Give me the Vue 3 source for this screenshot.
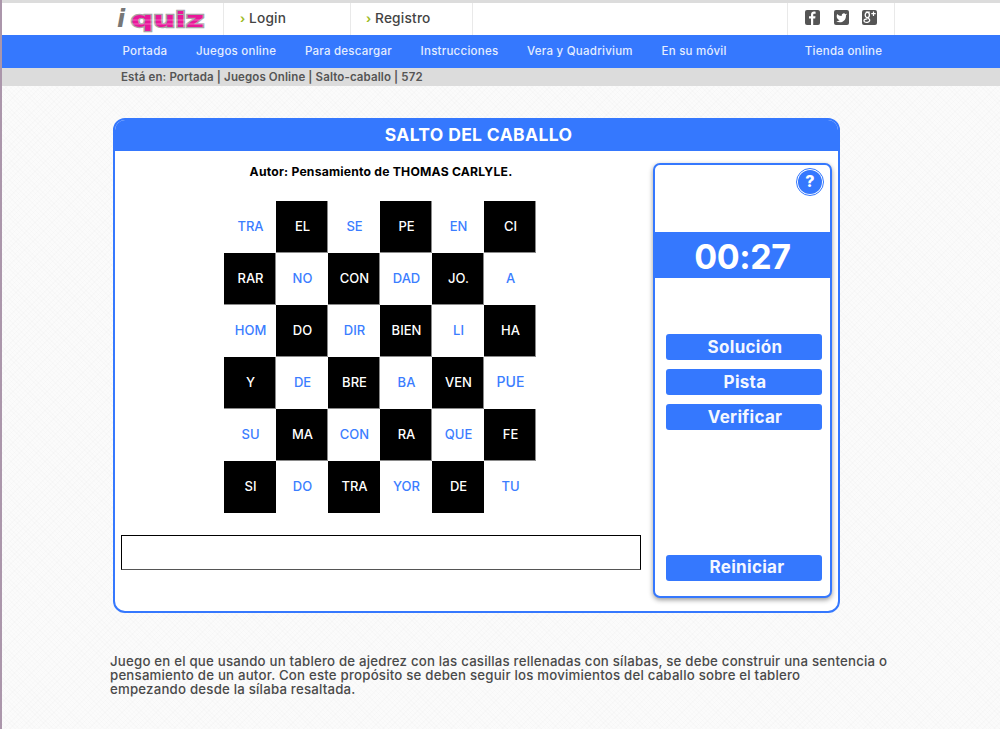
<script setup>
const nav = [
  { label: 'Portada' },
  { label: 'Juegos online' },
  { label: 'Para descargar' },
  { label: 'Instrucciones' },
  { label: 'Vera y Quadrivium' },
  { label: 'En su móvil' },
  { label: 'Tienda online', cls: 'shop' }
]
const rows = [
  ['TRA', 'EL', 'SE', 'PE', 'EN', 'CI'],
  ['RAR', 'NO', 'CON', 'DAD', 'JO.', 'A'],
  ['HOM', 'DO', 'DIR', 'BIEN', 'LI', 'HA'],
  ['Y', 'DE', 'BRE', 'BA', 'VEN', 'PUE'],
  ['SU', 'MA', 'CON', 'RA', 'QUE', 'FE'],
  ['SI', 'DO', 'TRA', 'YOR', 'DE', 'TU']
]
const cells = rows.flatMap((row, r) =>
  row.map((text, c) => ({
    text,
    dark: (r + c) % 2 === 1,
    last: r === 5,
    big: text === 'PUE'
  }))
)
</script>

<template>
  <div class="page">
    <header class="top">
      <div class="logo-cell">
        <svg class="logo" width="92" height="26" viewBox="0 0 92 26">
          <text x="1" y="18" class="logo-i">i</text>
          <text x="15" y="18" class="logo-q" textLength="73" lengthAdjust="spacingAndGlyphs">quiz</text>
          <path d="M15 11H88M15 15H88" stroke="#fff" stroke-opacity=".45" stroke-width=".8" />
        </svg>
      </div>
      <a class="tab tab-login"><span class="arrow">›</span>Login</a>
      <a class="tab tab-reg"><span class="arrow">›</span>Registro</a>
      <div class="social">
        <svg width="15" height="15" viewBox="0 0 15 15">
          <rect width="15" height="15" rx="2" fill="#555" />
          <path d="M8.2 15V8.6h2l.3-2.3H8.2V4.9c0-.7.2-1.1 1.1-1.1h1.3V1.7C10.300 1.700 9.700 1.600 9 1.600 7.300 1.600 6 2.700 6 4.600v1.700H4v2.300h2V15z" fill="#fff" />
        </svg>
        <svg width="15" height="15" viewBox="0 0 15 15">
          <rect width="15" height="15" rx="2" fill="#555" />
          <g transform="translate(1.700 2) scale(.49)">
            <path d="M23 3a10.900 10.900 0 0 1-3 1.400 4.500 4.500 0 0 0-7.900 3v1A10.700 10.700 0 0 1 3 4s-4 9 5 13a11.600 11.600 0 0 1-7 2c9 5 20 0 20-11.500a4.500 4.500 0 0 0-.1-.8A7.700 7.700 0 0 0 23 3z" fill="#fff" />
          </g>
        </svg>
        <svg width="15" height="15" viewBox="0 0 15 15">
          <rect width="15" height="15" rx="2" fill="#555" />
          <g fill="none" stroke="#fff" stroke-width="1.300">
            <ellipse cx="5.300" cy="5" rx="2.100" ry="2.600" />
            <path d="M7.800 2.100H3.800M6.600 7.300c-.6.6-.2 1 .5 1.600 1 .9 1 2.900-1.800 3.400-2 .3-3.300-.5-3.300-1.600 0-1.200 1.500-1.900 3.500-1.800" />
            <path d="M11.500 1.500v4.500M9.300 3.700h4.400" stroke-width="1.200" />
          </g>
        </svg>
      </div>
    </header>

    <nav class="nav">
      <a v-for="item in nav" :key="item.label" class="nav-item" :class="item.cls">{{ item.label }}</a>
    </nav>

    <div class="crumb">Está en: Portada | Juegos Online | Salto-caballo | 572</div>

    <main class="main">
      <section class="card">
        <h1 class="card-title">SALTO DEL CABALLO</h1>
        <div class="card-body">
          <div class="game">
            <p class="author">Autor: Pensamiento de THOMAS CARLYLE.</p>
            <div class="board">
              <div
                v-for="(cell, i) in cells"
                :key="i"
                class="cell"
                :class="{ dark: cell.dark, last: cell.last, big: cell.big }"
              >{{ cell.text }}</div>
            </div>
            <div class="answer"></div>
          </div>

          <aside class="panel">
            <div class="help-row">
              <span class="help"><span class="help-inner">?</span></span>
            </div>
            <div class="timer">00:27</div>
            <div class="actions">
              <button class="btn">Solución</button>
              <button class="btn">Pista</button>
              <button class="btn">Verificar</button>
              <button class="btn reset">Reiniciar</button>
            </div>
          </aside>
        </div>
      </section>

      <p class="desc">
        Juego en el que usando un tablero de ajedrez con las casillas rellenadas con sílabas, se debe construir una sentencia o<br />
        pensamiento de un autor. Con este propósito se deben seguir los movimientos del caballo sobre el tablero<br />
        empezando desde la sílaba resaltada.
      </p>
    </main>
  </div>
</template>

<style>
html, body {
  margin: 0;
  background: #fbfbfb;
}
</style>

<style scoped>
.page {
  box-sizing: border-box;
  min-height: 729px;
  border-left: 2px solid #ab96ab;
  font-family: Inter, "Open Sans", "Liberation Sans", sans-serif;
  background-color: #fbfbfb;
  background-image:
    repeating-linear-gradient(45deg, rgba(0, 0, 0, .012) 0 1px, transparent 1px 3px),
    repeating-linear-gradient(-45deg, rgba(0, 0, 0, .012) 0 1px, transparent 1px 4px);
  overflow: hidden;
}

.top {
  display: flex;
  height: 32px;
  background: #fff;
  border-top: 3px solid #dcdcdc;
}
.logo-cell {
  box-sizing: border-box;
  width: 222px;
  height: 32px;
  padding: 6px 0 0 114px;
  border-right: 1px solid #e9e9e9;
}
.logo { display: block; overflow: visible; }
.logo-i {
  font: italic 700 24px "DejaVu Sans", sans-serif;
  fill: #777;
}
.logo-q {
  font: 700 22px "DejaVu Sans", sans-serif;
  fill: #e9179a;
  stroke: #aaa3a7;
  stroke-width: 2.400px;
  paint-order: stroke;
}
.tab {
  box-sizing: border-box;
  display: flex;
  align-items: center;
  height: 32px;
  padding-left: 16px;
  font-size: 13.700px;
  font-weight: 500;
  letter-spacing: .2px;
  color: #444;
  border-right: 1px solid #e9e9e9;
  padding-bottom: 2px;
}
.tab-login { width: 127px; }
.tab-reg { width: 122px; padding-left: 15px; }
.arrow {
  width: 9px;
  font-size: 12px;
  font-weight: 700;
  color: #9dbb1f;
}
.social {
  box-sizing: border-box;
  display: flex;
  gap: 14px;
  height: 32px;
  margin-left: 314px;
  padding: 7px 0 0 17px;
  width: 108px;
  border-left: 1px solid #e9e9e9;
  border-right: 1px solid #e9e9e9;
}
.social svg:last-child { margin-left: -1px; }

.nav {
  display: flex;
  align-items: center;
  gap: 28.700px;
  box-sizing: border-box;
  height: 33px;
  padding: 0 0 2px 120.500px;
  background: #3578fe;
}
.nav-item {
  font-size: 11.500px;
  font-weight: 500;
  letter-spacing: .25px;
  color: #e4edff;
}
.shop { margin-left: 49.500px; }

.crumb {
  height: 18px;
  padding-left: 119px;
  background: #dcdcdc;
  font-size: 11.500px;
  font-weight: 600;
  line-height: 19px;
  letter-spacing: .12px;
  color: #555;
}

.main { padding: 32px 0 0 111px; }

.card {
  box-sizing: border-box;
  width: 727px;
  height: 495px;
  border: 2px solid #3578fe;
  border-radius: 12px;
  background: #fff;
  overflow: hidden;
}
.card-title {
  margin: 0;
  height: 31px;
  padding-left: 4px;
  background: #3578fe;
  font-size: 17.500px;
  font-weight: 700;
  line-height: 29px;
  letter-spacing: .35px;
  text-align: center;
  color: #fff;
}
.card-body {
  display: flex;
  align-items: flex-start;
}
.game {
  width: 520px;
  margin-left: 6px;
}
.author {
  margin: 14px 0 0;
  font-size: 12.200px;
  font-weight: 700;
  line-height: 14px;
  letter-spacing: .2px;
  text-align: center;
  color: #000;
}
.board {
  display: grid;
  grid-template-columns: repeat(6, 52px);
  grid-auto-rows: 52px;
  width: 312px;
  margin: 22px 0 0 103px;
}
.cell {
  display: flex;
  align-items: center;
  justify-content: center;
  font-size: 13px;
  font-weight: 500;
  color: #3b7dff;
  padding: 0 0 2px 1px;
  box-sizing: border-box;
}
.cell.dark {
  background: #000;
  color: #fff;
  box-shadow: inset -1px -1px 0 #8a8a8a;
}
.cell.dark.last { box-shadow: none; }
.cell.big {
  font-size: 14px;
  padding-bottom: 4px;
}
.answer {
  box-sizing: border-box;
  height: 35px;
  margin-top: 22px;
  border: 1px solid #000;
  border-bottom-color: #555;
  background: #fff;
}

.panel {
  box-sizing: border-box;
  display: flex;
  flex-direction: column;
  width: 179px;
  height: 435px;
  margin: 12px 0 0 12px;
  border: 2px solid #3578fe;
  border-radius: 7px;
  background: #fff;
  box-shadow: 0 2px 5px rgba(0, 0, 0, .4);
}
.help-row {
  box-sizing: border-box;
  display: flex;
  justify-content: flex-end;
  height: 67px;
  padding: 3px 6px 0 0;
}
.help {
  box-sizing: border-box;
  display: flex;
  width: 28px;
  height: 28px;
  padding: 1px;
  border: 1px solid #3578fe;
  border-radius: 50%;
  background: #fff;
}
.help-inner {
  flex: 1;
  border-radius: 50%;
  background: #3578fe;
  font-size: 16px;
  font-weight: 800;
  line-height: 23px;
  text-align: center;
  color: #fff;
}
.timer {
  height: 46px;
  background: #3578fe;
  font-size: 34px;
  font-weight: 700;
  line-height: 50px;
  letter-spacing: -.4px;
  text-align: center;
  color: #fff;
  overflow: hidden;
}
.actions {
  flex: 1;
  display: flex;
  flex-direction: column;
  gap: 9px;
  padding: 56px 8px 15px 11px;
}
.btn {
  height: 26px;
  padding: 0 0 0 2px;
  border: 0;
  border-radius: 3px;
  background: #3578fe;
  font-family: inherit;
  font-size: 17px;
  font-weight: 700;
  letter-spacing: .3px;
  line-height: 25px;
  color: #f4f7ff;
}
.reset {
  margin-top: auto;
  padding: 0 0 1px 6px;
}

.desc {
  margin: 41px 0 0 -3px;
  font-size: 13.250px;
  font-weight: 500;
  line-height: 14px;
  letter-spacing: .2px;
  color: #4a4a4a;
  white-space: nowrap;
}
</style>
